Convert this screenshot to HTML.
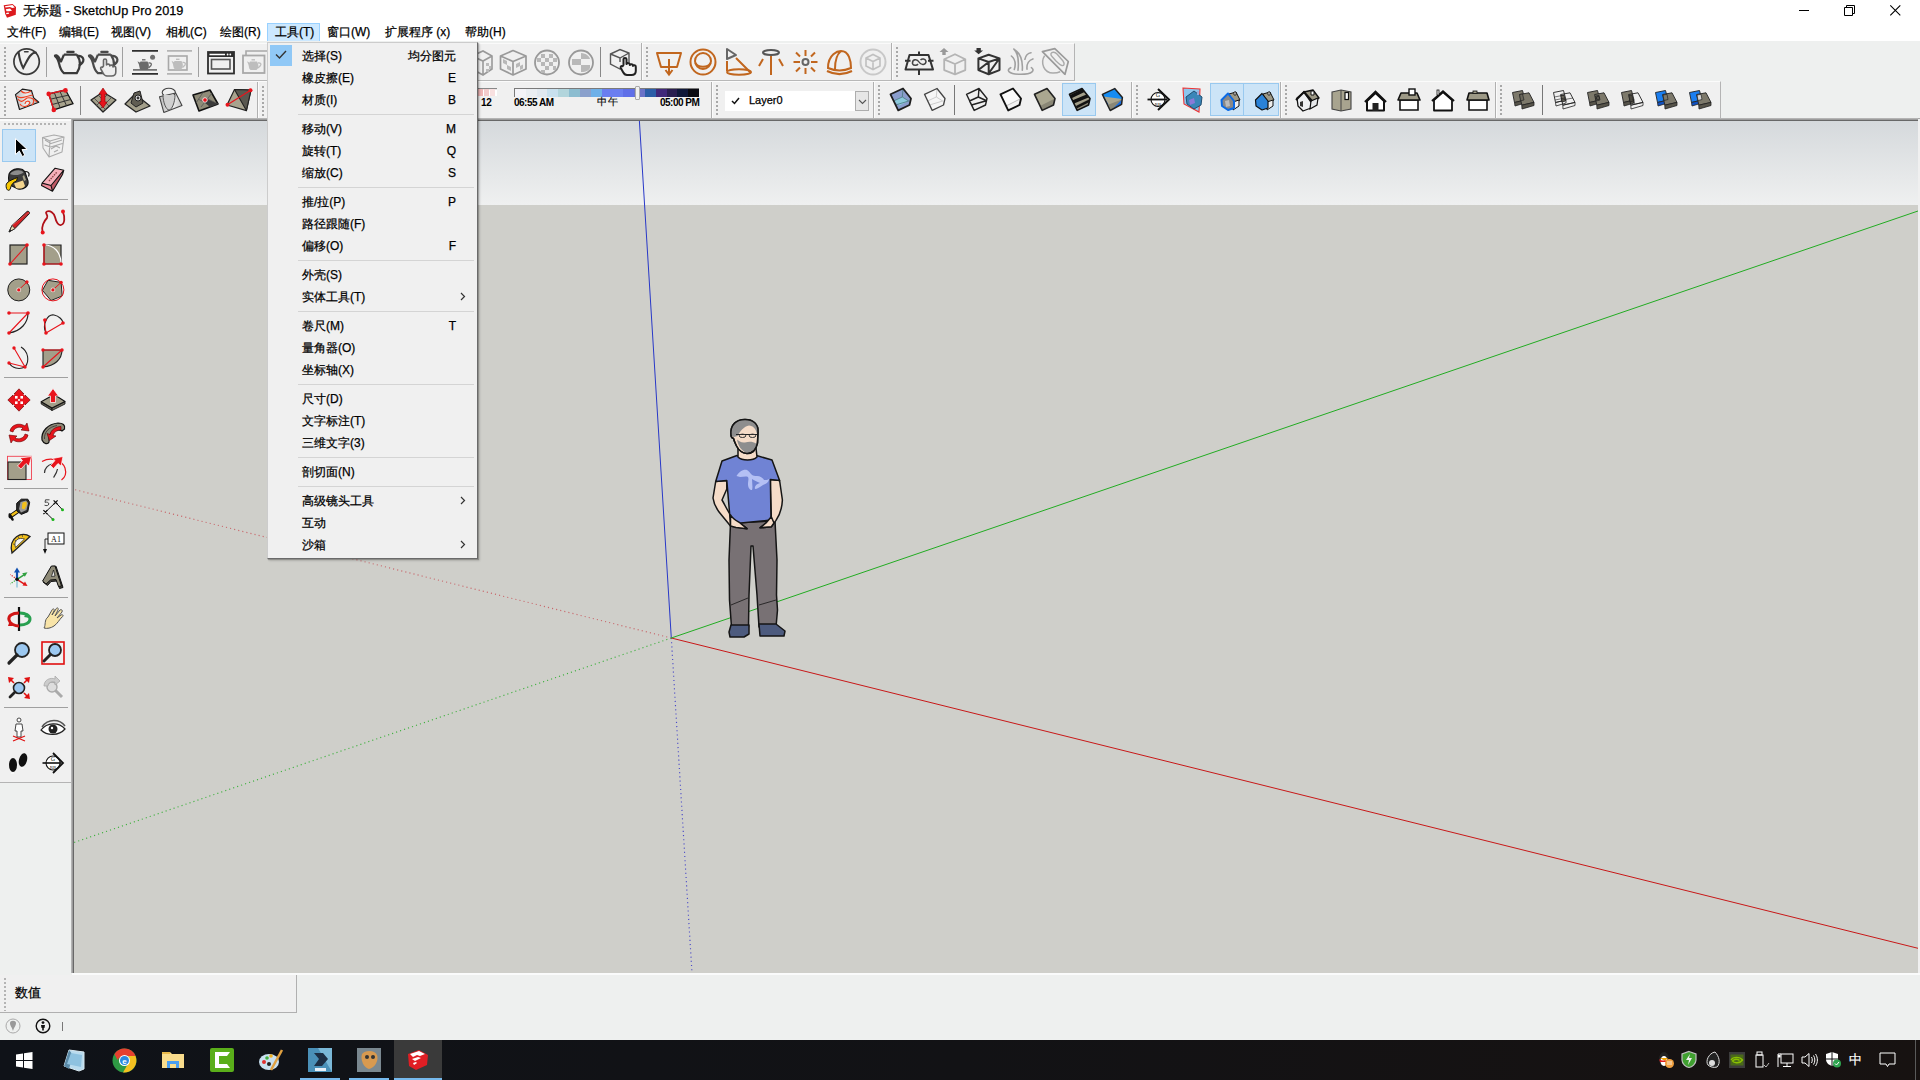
<!DOCTYPE html><html><head><meta charset="utf-8"><title>SketchUp</title><style>
*{margin:0;padding:0;box-sizing:border-box}
html,body{width:1920px;height:1080px;overflow:hidden;background:#f0f0f0;font-family:"Liberation Sans", sans-serif;}
.a{position:absolute}
.t{position:absolute;white-space:nowrap;color:#000;font-size:12px;line-height:14px;-webkit-text-stroke:0.25px #000}
svg{position:absolute;overflow:visible}
</style></head><body>
<div class="a" style="left:0;top:0;width:1920px;height:41px;background:#fff"></div>
<svg style="left:0;top:0" width="20" height="20" viewBox="0 0 20 20"><path d="M3.7 5.2 L12.5 4 L16 7 L15.8 14.8 L7 17.7 L5.2 14Z" fill="#dc1a1e"/><path d="M5 6.2 L12.5 5 L14.8 7.6 L12.2 8.1 L10 6.9 L5.4 7.6Z M5.8 9.3 L10 8.6 L12 10.8 L9 11.3 L6.5 11.2Z M6 13 L8.5 12.5 L9.2 13.8 L6.5 14.3Z" fill="#fff"/></svg>
<div class="t" style="left:23px;top:4px;font-size:12.7px;line-height:15px">无标题 - SketchUp Pro 2019</div>
<div class="a" style="left:1799px;top:10px;width:10px;height:1px;background:#000"></div>
<svg style="left:1844px;top:5px" width="11" height="11" viewBox="0 0 11 11"><path d="M0.5 2.5h8v8h-8z M2.5 2.5v-2h8v8h-2" fill="none" stroke="#000" stroke-width="1"/></svg>
<svg style="left:1890px;top:5px" width="11" height="11" viewBox="0 0 11 11"><path d="M0.3 0.3L10.3 10.3M10.3 0.3L0.3 10.3" stroke="#000" stroke-width="1.1"/></svg>
<div class="a" style="left:267px;top:23px;width:53px;height:19px;background:#cce8ff;border:1px solid #99d1ff"></div>
<div class="t" style="left:7px;top:25px">文件(F)</div>
<div class="t" style="left:59px;top:25px">编辑(E)</div>
<div class="t" style="left:111px;top:25px">视图(V)</div>
<div class="t" style="left:166px;top:25px">相机(C)</div>
<div class="t" style="left:220px;top:25px">绘图(R)</div>
<div class="t" style="left:275px;top:25px">工具(T)</div>
<div class="t" style="left:327px;top:25px">窗口(W)</div>
<div class="t" style="left:385px;top:25px">扩展程序 (x)</div>
<div class="t" style="left:465px;top:25px">帮助(H)</div>
<div class="a" style="left:0;top:41px;width:1920px;height:80px;background:#eef0ef"></div>
<div class="a" style="left:0;top:43px;width:1075px;height:38px;background:#f0f0f0;border-top:1px solid #fafafa;border-right:1px solid #b4b4b4;border-bottom:1px solid #b8b8b8"></div>
<div class="a" style="left:0;top:81px;width:1721px;height:37px;background:#f0f0f0;border-top:1px solid #fbfbfb;border-right:1px solid #b4b4b4"></div>
<div class="a" style="left:0;top:118px;width:1920px;height:1px;background:#a8a8a8"></div>
<div class="a" style="left:0;top:119px;width:71px;height:1px;background:#fafafa"></div>
<div class="a" style="left:0;top:120px;width:71px;height:662px;background:#f0f0f0;border-top:1px solid #fbfbfb"></div>
<div class="a" style="left:0;top:782px;width:72px;height:1px;background:#b4b4b4"></div>
<div class="a" style="left:0;top:783px;width:72px;height:190px;background:#eef0ef"></div>
<div class="a" style="left:71px;top:118px;width:1px;height:855px;background:#b4b4b4"></div>
<div class="a" style="left:72px;top:119px;width:1px;height:854px;background:#9c9c9c"></div>
<div class="a" style="left:73px;top:120px;width:1px;height:853px;background:#686868"></div>
<div class="a" style="left:71px;top:118px;width:1847px;height:1px;background:#b4b4b4"></div>
<div class="a" style="left:72px;top:119px;width:1846px;height:1px;background:#9c9c9c"></div>
<div class="a" style="left:73px;top:120px;width:1845px;height:1px;background:#686868"></div>
<div class="a" style="left:74px;top:121px;width:1844px;height:84px;background:linear-gradient(#d5d9dc,#eff0f0)"></div>
<div class="a" style="left:74px;top:205px;width:1844px;height:768px;background:#cfcfca"></div>
<div class="a" style="left:1918px;top:121px;width:2px;height:852px;background:#f0f0f0"></div>
<svg style="left:74px;top:121px" width="1844" height="852" viewBox="74 121 1844 852"><line x1="671.3" y1="638" x2="639.4" y2="121" stroke="#2838c8" stroke-width="1"/><line x1="671.3" y1="638" x2="692" y2="973" stroke="#4848c8" stroke-width="1.15" stroke-dasharray="1.1 3.1"/><line x1="671.3" y1="638" x2="1918" y2="948.3" stroke="#c81818" stroke-width="1"/><line x1="671.3" y1="638" x2="74" y2="489.5" stroke="#c8686c" stroke-width="1.15" stroke-dasharray="1.1 3.1"/><line x1="671.3" y1="638" x2="1918" y2="211" stroke="#22ac22" stroke-width="1"/><line x1="671.3" y1="638" x2="74" y2="842.5" stroke="#3cb03c" stroke-width="1.15" stroke-dasharray="1.1 3.1"/></svg>
<div class="a" style="left:0;top:973px;width:1920px;height:67px;background:#eef0ef"></div>
<div class="a" style="left:72px;top:973px;width:1848px;height:2px;background:#fafbfb"></div>
<div class="a" style="left:0;top:975px;width:297px;height:38px;background:#f0f0f0;border-right:1px solid #b0b0b0;border-bottom:1px solid #b0b0b0"></div>
<div class="t" style="left:15px;top:985px;font-size:13px;line-height:15px">数值</div>
<div class="a" style="left:0;top:1040px;width:1920px;height:40px;background:linear-gradient(90deg,#0f1218,#121215 50%,#171211)"></div>
<div class="a" style="left:4px;top:47px;width:2px;height:31px;background:repeating-linear-gradient(transparent 0 0.5px,#a8a8a8 0.5px 2px,transparent 2px 4px)"></div><svg style="left:13px;top:48px" width="28" height="28" viewBox="0 0 28 28"><circle cx="13.6" cy="13.6" r="12.7" fill="none" stroke="#3a3a3a" stroke-width="1.7"/><path d="M5.6 4.4 C6.5 11 8 16 10.2 19.9 C12.5 16 14.5 11 17 8 C19 5.5 21 4.5 22.8 4.5" fill="none" stroke="#3a3a3a" stroke-width="2.1" stroke-linecap="round"/><path d="M11.6 3.8 H15" stroke="#3a3a3a" stroke-width="1.6" stroke-linecap="round"/></svg><div class="a" style="left:46px;top:47px;width:1px;height:30px;background:#a0a0a0"></div><svg style="left:54px;top:50px" width="30" height="27" viewBox="0 0 30 27"><path d="M13.3 1.9 H19.6" stroke="#3a3a3a" stroke-width="2.2" stroke-linecap="round"/><path d="M9.9 4.7 H22.8 M22.8 4.7 C25 8 26 11 25.9 14 C25.8 17 24.5 20.5 22.8 23.1 H9.9 C7.5 21 6 18 5.2 14 C4.5 11 3.5 8 1.5 6.5 C0.5 5.8 1 5 2.5 5.3 C4 5.6 5.5 8 7 11.6 L9.9 4.7" fill="none" stroke="#3a3a3a" stroke-width="2.2" stroke-linejoin="round"/><path d="M23.5 6 C26 5.5 29 6.5 29.4 9.5 C29.6 12 27.5 14 24.8 15.6" fill="none" stroke="#3a3a3a" stroke-width="2.2"/></svg><svg style="left:88px;top:50px" width="30" height="27" viewBox="0 0 30 27"><path d="M13.3 1.9 H19.6" stroke="#4a4a4a" stroke-width="2.2" stroke-linecap="round"/><path d="M9.9 4.7 H22.8 M22.8 4.7 C25 8 26 11 25.9 14 C25.8 17 24.5 20.5 22.8 23.1 H9.9 C7.5 21 6 18 5.2 14 C4.5 11 3.5 8 1.5 6.5 C0.5 5.8 1 5 2.5 5.3 C4 5.6 5.5 8 7 11.6 L9.9 4.7" fill="none" stroke="#4a4a4a" stroke-width="2.2" stroke-linejoin="round"/><path d="M23.5 6 C26 5.5 29 6.5 29.4 9.5 C29.6 12 27.5 14 24.8 15.6" fill="none" stroke="#4a4a4a" stroke-width="2.2"/></svg><svg style="left:100px;top:58px" width="17" height="19" viewBox="0 0 17 19"><path d="M3.5 8 V2.3 C3.5 0.5 6.5 0.5 6.5 2.3 V7 C7 5.8 9.5 5.8 9.8 7.2 V8 C10.3 6.8 12.7 6.8 13 8.4 V9 C13.4 8 15.8 8 15.8 9.8 V14 C15.8 16.5 14 18 11.5 18 H7 C5 18 4 17 3 15 L0.8 11 C0.2 9.8 1.2 8.5 2.5 9.3 Z" fill="#eee" stroke="#666" stroke-width="1.6" stroke-linejoin="round"/></svg><div class="a" style="left:122px;top:47px;width:1px;height:30px;background:#a0a0a0"></div><svg style="left:131px;top:50px" width="28" height="26" viewBox="0 0 28 26"><path d="M1 0.9H27 M1 23.9H27" stroke="#2e2e2e" stroke-width="1.8"/><path d="M2 19.9H26" stroke="#666" stroke-width="1.6"/><g transform="translate(6 9) scale(1.0)"><path d="M5 0.8 H8.5" stroke="#6a6a6a" stroke-width="1.4"/><path d="M3.5 2.5 H10.5 C12 5 12.3 7 11.3 9.5 L10 11 H4 L2.8 9.5 C2 7 2 5 3.5 2.5Z" fill="#6a6a6a"/><path d="M3.5 4 L0.5 2.2 L2.8 7.5" fill="#6a6a6a"/><path d="M11.5 4 C14 3.5 15 5 14 6.5 L11.5 9" fill="none" stroke="#6a6a6a" stroke-width="1.3"/></g><circle cx="21.6" cy="7.3" r="2.5" fill="#707070"/></svg><svg style="left:166px;top:50px" width="28" height="26" viewBox="0 0 28 26"><path d="M1 0.9H26 M1 23.9H26" stroke="#b4b4b4" stroke-width="1.6"/><rect x="2.5" y="6" width="18.5" height="14" fill="none" stroke="#a8a8a8" stroke-width="1.6"/><g transform="translate(5 8.5) scale(1.0)"><path d="M5 0.8 H8.5" stroke="#bdbdbd" stroke-width="1.4"/><path d="M3.5 2.5 H10.5 C12 5 12.3 7 11.3 9.5 L10 11 H4 L2.8 9.5 C2 7 2 5 3.5 2.5Z" fill="#bdbdbd"/><path d="M3.5 4 L0.5 2.2 L2.8 7.5" fill="#bdbdbd"/><path d="M11.5 4 C14 3.5 15 5 14 6.5 L11.5 9" fill="none" stroke="#bdbdbd" stroke-width="1.3"/></g></svg><div class="a" style="left:198px;top:47px;width:1px;height:30px;background:#a0a0a0"></div><svg style="left:207px;top:51px" width="29" height="24" viewBox="0 0 29 24"><rect x="1" y="1" width="26" height="21.5" fill="none" stroke="#2e2e2e" stroke-width="1.8"/><path d="M1 1 H27 V6 H1Z" fill="#2e2e2e"/><path d="M2.5 3.5 H18" stroke="#fff" stroke-width="1.5"/><circle cx="20.6" cy="3.5" r="0.9" fill="#fff"/><circle cx="23.3" cy="3.5" r="0.9" fill="#fff"/><rect x="4.5" y="8.5" width="18.5" height="9.5" fill="none" stroke="#555" stroke-width="1.6"/></svg><svg style="left:242px;top:49px" width="26" height="26" viewBox="0 0 26 26"><path d="M4 6 V2 H26" fill="none" stroke="#a8a8a8" stroke-width="1.6"/><rect x="1" y="6.5" width="21.5" height="17.5" fill="none" stroke="#a8a8a8" stroke-width="1.8"/><g transform="translate(4.5 10) scale(1.0)"><path d="M5 0.8 H8.5" stroke="#bdbdbd" stroke-width="1.4"/><path d="M3.5 2.5 H10.5 C12 5 12.3 7 11.3 9.5 L10 11 H4 L2.8 9.5 C2 7 2 5 3.5 2.5Z" fill="#bdbdbd"/><path d="M3.5 4 L0.5 2.2 L2.8 7.5" fill="#bdbdbd"/><path d="M11.5 4 C14 3.5 15 5 14 6.5 L11.5 9" fill="none" stroke="#bdbdbd" stroke-width="1.3"/></g></svg><svg style="left:470px;top:49px" width="24" height="28" viewBox="0 0 24 28"><path d="M2 7 L13 2 L22 7 V20 L13 26 L2 20 Z M2 7 L13 12 L22 7 M13 12 V26" fill="none" stroke="#999" stroke-width="1.6"/><path d="M16 14h3v3h-3z M19 17h2v3h-2z M16 20h3v3h-3z" fill="#bbb"/></svg><svg style="left:499px;top:49px" width="29" height="27" viewBox="0 0 29 27"><path d="M1.5 7 L14 1.5 L27 7 V20 L14 26 L1.5 20 Z M1.5 7 L14 12.5 L27 7 M14 12.5 V26" fill="none" stroke="#999" stroke-width="1.7" stroke-linejoin="round"/><path d="M4 10l4 2v4l-4-2z M8 16l4 2v4l-4-2z M17 15l4-2v4l-4 2z M21 17l3-1.5v4l-3 1.5z" fill="#b8b8b8"/></svg><svg style="left:534px;top:49px" width="26" height="27" viewBox="0 0 26 27"><circle cx="13" cy="13.5" r="12" fill="none" stroke="#999" stroke-width="1.8"/><path d="M7 5h4v4H7z M15 5h4v4h-4z M3 9h4v4H3z M11 9h4v4h-4z M19 9h4v4h-4z M7 13h4v4H7z M15 13h4v4h-4z M11 17h4v4h-4z M19 17h3v4h-3z M7 21h4v3H7z" fill="#b8b8b8"/></svg><svg style="left:568px;top:49px" width="26" height="27" viewBox="0 0 26 27"><circle cx="13" cy="13.5" r="12" fill="none" stroke="#999" stroke-width="1.8"/><path d="M13 4 C18 4 22 8 22 10H13z M4 10h9v6H4z M13 16h9v3C21 21 19 23 13 23z" fill="#b8b8b8"/></svg><div class="a" style="left:600px;top:47px;width:1px;height:30px;background:#888"></div><svg style="left:609px;top:48px" width="22" height="23" viewBox="0 0 22 23"><path d="M1.5 6 L11 1.5 L20 5 V16 L11 21 L1.5 16 Z M1.5 6 L11 10 L20 5 M11 10 V14" fill="none" stroke="#555" stroke-width="1.4"/></svg><svg style="left:620px;top:57px" width="17" height="20" viewBox="0 0 17 20"><path d="M3.5 8 V2.3 C3.5 0.5 6.5 0.5 6.5 2.3 V7 C7 5.8 9.5 5.8 9.8 7.2 V8 C10.3 6.8 12.7 6.8 13 8.4 V9 C13.4 8 15.8 8 15.8 9.8 V14 C15.8 16.5 14 18 11.5 18 H7 C5 18 4 17 3 15 L0.8 11 C0.2 9.8 1.2 8.5 2.5 9.3 Z" fill="#f4f4f4" stroke="#222" stroke-width="2" stroke-linejoin="round"/></svg><div class="a" style="left:641px;top:43px;width:1px;height:37px;background:#b0b0b0;box-shadow:1px 0 0 #fbfbfb"></div><div class="a" style="left:646px;top:47px;width:2px;height:31px;background:repeating-linear-gradient(transparent 0 0.5px,#a8a8a8 0.5px 2px,transparent 2px 4px)"></div><svg style="left:655px;top:50px" width="28" height="26" viewBox="0 0 28 26"><path d="M2 3H26 L22 17H6Z" fill="none" stroke="#c1661e" stroke-width="2" stroke-linejoin="round"/><path d="M14 9V24 M10.5 20 L14 24.5 L17.5 20" fill="none" stroke="#c1661e" stroke-width="2"/></svg><svg style="left:689px;top:48px" width="28" height="28" viewBox="0 0 28 28"><circle cx="14" cy="14" r="12.5" fill="none" stroke="#c1661e" stroke-width="2"/><circle cx="14" cy="13" r="8" fill="none" stroke="#c1661e" stroke-width="2"/><path d="M6.5 15 C9 20 19 20 21.5 15" fill="none" stroke="#c1661e" stroke-width="2"/></svg><svg style="left:725px;top:48px" width="28" height="28" viewBox="0 0 28 28"><path d="M2 1 L11 7 L2 11Z" fill="none" stroke="#666" stroke-width="2" stroke-linejoin="round"/><path d="M2 13 L2 23 M11 10 L26 25" stroke="#c1661e" stroke-width="2"/><ellipse cx="14" cy="24" rx="12" ry="2.8" fill="none" stroke="#c1661e" stroke-width="2"/></svg><svg style="left:758px;top:48px" width="26" height="28" viewBox="0 0 26 28"><ellipse cx="13" cy="4.5" rx="8" ry="2.5" fill="none" stroke="#555" stroke-width="2"/><path d="M13 8V27 M5 11L1 18 M21 11L25 18" stroke="#c1661e" stroke-width="2"/></svg><svg style="left:793px;top:49px" width="25" height="26" viewBox="0 0 25 26"><circle cx="12.5" cy="13" r="3" fill="none" stroke="#666" stroke-width="2"/><path d="M12.5 1V7 M12.5 19V25 M0.5 13H7 M18 13H24.5 M3 3.5L7 7.5 M18 18.5L22 22.5 M22 3.5L18 7.5 M7 18.5L3 22.5" stroke="#c1661e" stroke-width="2"/></svg><svg style="left:826px;top:49px" width="27" height="26" viewBox="0 0 27 26"><path d="M2 19 C2 5 12 2 15 2 C23 2 25 12 25 19 C18 22 9 22 2 19Z M15 2 C10 6 9 14 9 20" fill="none" stroke="#c1661e" stroke-width="2"/><path d="M1 22 C9 26 18 26 26 22" fill="none" stroke="#c1661e" stroke-width="2"/></svg><svg style="left:859px;top:48px" width="28" height="28" viewBox="0 0 28 28"><circle cx="14" cy="14" r="12.5" fill="none" stroke="#c8c8c8" stroke-width="2"/><path d="M7 10 L14 6.5 L21 10 V18 L14 21.5 L7 18Z M7 10L14 13.5 L21 10 M14 13.5V21.5" fill="none" stroke="#c0c0c0" stroke-width="1.6"/></svg><div class="a" style="left:891px;top:43px;width:1px;height:37px;background:#b0b0b0;box-shadow:1px 0 0 #fbfbfb"></div><div class="a" style="left:896px;top:47px;width:2px;height:31px;background:repeating-linear-gradient(transparent 0 0.5px,#a8a8a8 0.5px 2px,transparent 2px 4px)"></div><svg style="left:905px;top:48px" width="29" height="28" viewBox="0 0 29 28"><path d="M14 3.5V7.5 M14 21V27 M0 12.7H5.5 M23 12.7H28.5" stroke="#333" stroke-width="2"/><path d="M4.5 7 H23.5 L28 21.6 H0.5Z" fill="none" stroke="#333" stroke-width="2" stroke-linejoin="round"/><path d="M7.5 16 C7 11 12 10.5 14 14 C16 17.5 21 17.5 21 13 M7.5 16 C9 18 12 17.5 13 16 M21 13 C20 10.5 17 10.5 15.5 12" fill="none" stroke="#444" stroke-width="1.5"/></svg><svg style="left:939px;top:47px" width="28" height="29" viewBox="0 0 28 29"><path d="M0.5 5 L5 1 L9.5 5Z M3.3 5H6.7V8H3.3Z" fill="#999"/><path d="M16 7.2 L26.3 12.3 V23.1 L16 27.3 L5.2 23.1 V12.3Z M5.2 12.3 L16 17 L26.3 12.3 M16 17 V27.3" fill="none" stroke="#b4b4b4" stroke-width="1.8" stroke-linejoin="round"/></svg><svg style="left:974px;top:47px" width="27" height="29" viewBox="0 0 27 29"><path d="M0.2 3.4 H9.1 L4.6 7.2Z M2.5 1H6.8V3.5H2.5Z" fill="#333"/><path d="M14.7 7.7 L25.5 11.4 V23.1 L14.7 27.3 L4.4 23.1 V11.4Z M4.4 11.4 L14.7 15 L25.5 11.4 M14.7 15 V27.3 M4.4 23 L14.7 15 M15 26 L25 12" fill="none" stroke="#333" stroke-width="2" stroke-linejoin="round"/></svg><svg style="left:1003px;top:44px" width="34" height="34" viewBox="0 0 34 34"><path d="M7.7 23.7 C3 26 5 30.3 17.9 30.3 C30 30.3 32 26 28.4 23.7 M8.4 12 C12 15 13 20 11.3 25.5 M10.9 5.1 C15 9 16 17 15 26.2 M10.9 5.1 C17 9 20 17 19.3 26.2 M28 8.7 C25 9 22.5 12 21.9 15.3 M29.9 14.9 C26 16 23.5 20 24 25.2" fill="none" stroke="#a0a0a0" stroke-width="1.6" stroke-linecap="round"/></svg><svg style="left:1041px;top:48px" width="30" height="30" viewBox="0 0 30 30"><path d="M1.4 3.7 L13.8 0.7 L27.3 13.5 L24 26.3Z" fill="none" stroke="#9a9a9a" stroke-width="1.7" stroke-linejoin="round"/><path d="M10 5.5 C11 3.5 14 4 16 6 L22 13 C24 16 23 18 21 17.5 C19 17 17 15 15 13 L11 8.5 C10 7.5 9.7 6.5 10 5.5Z" fill="none" stroke="#aaa" stroke-width="1.4"/><path d="M3.6 7.7 C-1 15 3 25 12 25 C15 25 17.5 24.5 19.2 23.7" fill="none" stroke="#aaa" stroke-width="1.5"/></svg>
<div class="a" style="left:257px;top:82px;width:1px;height:36px;background:#b0b0b0;box-shadow:1px 0 0 #fbfbfb"></div><div class="a" style="left:4px;top:86px;width:2px;height:30px;background:repeating-linear-gradient(transparent 0 0.5px,#a8a8a8 0.5px 2px,transparent 2px 4px)"></div><svg style="left:15px;top:88px" width="25" height="23" viewBox="0 0 25 23"><defs><linearGradient id="sg" x1="0" x2="1"><stop offset="0" stop-color="#bbb"/><stop offset="0.5" stop-color="#eee"/><stop offset="1" stop-color="#aaa"/></linearGradient></defs><path d="M0.5 6.6 L7.4 1.1 L16.5 2.6 L18.7 9.9 L23.8 14.2 L4.5 21.5Z" fill="url(#sg)" stroke="#1a1a1a" stroke-width="1.2" stroke-linejoin="round"/><path d="M6 3 C9 6 13 5 16 3 M2 8 C5 12 11 8 18 7 M3 11 C6 16 9 12 12 10 C15 9 19 11 22 14 M5 16 C7 20 13 19 15 15 C14 12 10 13 10 16 M17 17 C19 15 19 12 18 11" fill="none" stroke="#f04020" stroke-width="1.1"/></svg><svg style="left:46px;top:88px" width="29" height="25" viewBox="0 0 29 25"><path d="M2.7 5.9 L19.5 2 L27.1 15.7 L7.8 21.9Z" fill="#a8a38d" stroke="#111" stroke-width="1.3" stroke-linejoin="round"/><path d="M8.3 4.6 L14.2 19.8 M13.9 3.3 L20.6 17.8 M4.3 11.2 L22.2 7.2 M5.9 16.6 L24.6 11.5" stroke="#333" stroke-width="1"/><path d="M2.7 5.9 L19.5 2 M2.7 5.9 L7.8 21.9" stroke="#e8141c" stroke-width="1.4"/><circle cx="2.7" cy="5.9" r="2.3" fill="#e8141c"/><circle cx="19.5" cy="2.4" r="2.3" fill="#e8141c"/><circle cx="7.8" cy="21.9" r="2.3" fill="#e8141c"/></svg><div class="a" style="left:80px;top:86px;width:1px;height:29px;background:#888"></div><svg style="left:90px;top:87px" width="27" height="26" viewBox="0 0 27 26"><path d="M1 13 L13 5 L26 13 L13 25Z" fill="#a39f8a" stroke="#222" stroke-width="1.3" stroke-linejoin="round"/><path d="M4 11 L16 23 M8 8 L20 20 M18 7 L6 19 M22 10 L10 22" stroke="#444" stroke-width="0.8"/><path d="M13 1 L17 7 H15 V15 H17 L13 21 L9 15 H11 V7 H9Z" fill="#e8141c" stroke="#900" stroke-width="0.6"/></svg><svg style="left:124px;top:89px" width="27" height="24" viewBox="0 0 27 24"><path d="M1 15 L11 5 L26 17 L12 23Z" fill="#a39f8a" stroke="#222" stroke-width="1.3" stroke-linejoin="round"/><path d="M7 14 L10 4 L16 2 L19 14 L12 18Z" fill="#605d52" stroke="#222" stroke-width="1"/><circle cx="14" cy="9" r="3" fill="#ddd" stroke="#222" stroke-width="1"/><circle cx="14" cy="9" r="1.4" fill="#333"/></svg><svg style="left:159px;top:87px" width="24" height="27" viewBox="0 0 24 27"><defs><linearGradient id="dg" x1="0" x2="1"><stop offset="0" stop-color="#bdbdbd"/><stop offset="0.6" stop-color="#eee"/><stop offset="1" stop-color="#c8c8c8"/></linearGradient></defs><path d="M0.5 9.8 L16.7 6 L23 18.6 L4.8 25.4Z" fill="url(#dg)" stroke="#444" stroke-width="1.1" stroke-linejoin="round"/><ellipse cx="9.8" cy="5.4" rx="6.6" ry="4.2" fill="none" stroke="#444" stroke-width="1.1"/><path d="M4 8 C4 15 7 23 10 23 C13 23 16 15 16 8" fill="#d0d0d0" stroke="#555" stroke-width="1"/></svg><svg style="left:192px;top:89px" width="27" height="23" viewBox="0 0 27 23"><path d="M1 6 L18 1 L26 15 L7 22Z" fill="#8f8b78" stroke="#111" stroke-width="1.6" stroke-linejoin="round"/><path d="M4 14 L12 2 M9 18 L20 4 M14 9 L26 15 M6 10 L18 16" stroke="#555" stroke-width="0.8"/><path d="M15 10 L26 15 L18 18 L12 13Z" fill="#3a3a3a"/><circle cx="13" cy="11" r="2.3" fill="#e8141c" stroke="#fff" stroke-width="0.8"/></svg><svg style="left:226px;top:89px" width="27" height="24" viewBox="0 0 27 24"><path d="M1 16 L8.5 0.5 L25 1 L20.4 21.6Z" fill="#a8a38e" stroke="#222" stroke-width="1.2" stroke-linejoin="round"/><path d="M8.5 0.5 L25 1 L20.4 21.6Z" fill="#5a5850" stroke="#222" stroke-width="1.1" stroke-linejoin="round"/><path d="M1 16 L25 1" stroke="#e8141c" stroke-width="1.2"/><circle cx="1.5" cy="15.7" r="2" fill="#e8141c"/><circle cx="24.5" cy="1.3" r="2" fill="#e8141c"/></svg><div class="a" style="left:262px;top:86px;width:2px;height:30px;background:repeating-linear-gradient(transparent 0 0.5px,#a8a8a8 0.5px 2px,transparent 2px 4px)"></div><svg style="left:476px;top:87px" width="22" height="10" viewBox="0 0 22 10"><rect x="1" y="1" width="20" height="8" fill="#fff"/><rect x="1" y="1" width="20" height="1.2" fill="#888"/><rect x="2" y="2" width="5" height="7" fill="#f0b8b8"/><rect x="8" y="2" width="5" height="7" fill="#f3cccc"/><rect x="14" y="2" width="5" height="7" fill="#f8e0e0"/></svg><div class="t" style="left:481px;top:97px;font-size:10px;line-height:11px;font-weight:bold;letter-spacing:-0.3px;-webkit-text-stroke:0">12</div><div class="a" style="left:514px;top:88px;width:185px;height:9px;background:linear-gradient(90deg,#f4f4f8 0.0% 5.9%, #eaeef2 5.9% 11.8%, #e0e8ef 11.8% 17.6%, #c8e0ee 17.6% 23.5%, #b2d5dc 23.5% 29.4%, #8cbdd0 29.4% 35.3%, #8aa0cc 35.3% 41.2%, #6fb0e8 41.2% 47.1%, #6a7ef0 47.1% 52.9%, #6a7ef0 52.9% 58.8%, #5f6fe8 58.8% 64.7%, #6a72c8 64.7% 70.6%, #2b5ea8 70.6% 76.5%, #40287a 76.5% 82.4%, #2a1e50 82.4% 88.2%, #10183a 88.2% 94.1%, #0a0a12 94.1% 100.0%);border-top:1.5px solid #7a7a7a;border-left:1.5px solid #7a7a7a"></div><div class="a" style="left:635px;top:86px;width:5px;height:14px;background:#f0f0f0;border:1px solid #aaa;border-radius:1px"></div><div class="t" style="left:514px;top:97px;font-size:10px;line-height:11px;font-weight:bold;letter-spacing:-0.5px;-webkit-text-stroke:0">06:55 AM</div><div class="t" style="left:597px;top:96px;font-size:10px;line-height:11px;letter-spacing:1px;-webkit-text-stroke:0.15px #000">中午</div><div class="t" style="left:660px;top:97px;font-size:10px;line-height:11px;font-weight:bold;letter-spacing:-0.5px;-webkit-text-stroke:0">05:00 PM</div><div class="a" style="left:711px;top:82px;width:1px;height:36px;background:#b0b0b0;box-shadow:1px 0 0 #fbfbfb"></div><div class="a" style="left:716px;top:85px;width:2px;height:31px;background:repeating-linear-gradient(transparent 0 0.5px,#a8a8a8 0.5px 2px,transparent 2px 4px)"></div><div class="a" style="left:725px;top:91px;width:144px;height:20px;background:#fff"></div><div class="a" style="left:855px;top:91px;width:14px;height:20px;background:#e6e6e6;border:1px solid #adadad"></div><svg style="left:858px;top:99px" width="9" height="6" viewBox="0 0 9 6"><path d="M1 1 L4.5 4.5 L8 1" fill="none" stroke="#555" stroke-width="1.1"/></svg><svg style="left:731px;top:97px" width="9" height="8" viewBox="0 0 9 8"><path d="M1 4 L3.5 6.5 L8 1" fill="none" stroke="#111" stroke-width="1.5"/></svg><div class="t" style="left:749px;top:94px;font-size:11px;line-height:13px">Layer0</div><div class="a" style="left:873px;top:82px;width:1px;height:36px;background:#b0b0b0;box-shadow:1px 0 0 #fbfbfb"></div><div class="a" style="left:878px;top:85px;width:2px;height:31px;background:repeating-linear-gradient(transparent 0 0.5px,#a8a8a8 0.5px 2px,transparent 2px 4px)"></div><svg style="left:890px;top:88px" width="23" height="24" viewBox="0 0 23 24"><path d="M0.5 6.3 L13 0.5 L21 10.5 L19.5 17 L8.2 22.4Z" fill="#8a9dcc"/><path d="M7 17.5 L21 10.5 L19.5 17 L8.2 22.4Z" fill="#8a9dcc"/><path d="M3.5 13 L12.3 9 L18.7 13 L9.5 17.5Z" fill="#8ccadc"/><path d="M13 0.5 L12.3 9 M3.5 13 L12.3 9 L18.7 13 M5.5 17 L18.7 13" fill="none" stroke="#4a7a80" stroke-width="0.8"/><path d="M0.5 6.3 L13 0.5 L21 10.5 L19.5 17 L8.2 22.4Z" fill="none" stroke="#1e1e1e" stroke-width="1.8" stroke-linejoin="round"/></svg><svg style="left:924px;top:88px" width="23" height="24" viewBox="0 0 23 24"><path d="M0.5 6.3 L13 0.5 L21 10.5 L19.5 17 L8.2 22.4Z" fill="#f6f6f6"/><path d="M7 17.5 L21 10.5 L19.5 17 L8.2 22.4Z" fill="#f6f6f6"/><path d="M13 0.5 L12.3 9 L3.5 13 M12.3 9 L18.7 13 M5.5 17 L18.7 13" fill="none" stroke="#bbb" stroke-width="0.7"/><path d="M0.5 6.3 L13 0.5 L21 10.5 L19.5 17 L8.2 22.4Z" fill="none" stroke="#444" stroke-width="1.3" stroke-linejoin="round"/></svg><div class="a" style="left:954px;top:85px;width:1px;height:30px;background:#777"></div><svg style="left:966px;top:88px" width="23" height="24" viewBox="0 0 23 24"><path d="M0.5 6.3 L13 0.5 L21 10.5 L19.5 17 L8.2 22.4Z M13 0.5 L12.3 9 L3.5 13 M12.3 9 L20 12.5 M5.5 17 L19.5 13 M3.5 13 L8.2 22.4" fill="none" stroke="#222" stroke-width="1.4" stroke-linejoin="round"/></svg><svg style="left:1000px;top:88px" width="23" height="24" viewBox="0 0 23 24"><path d="M0.5 6.3 L13 0.5 L21 10.5 L19.5 17 L8.2 22.4Z" fill="#fafafa"/><path d="M7 17.5 L21 10.5 L19.5 17 L8.2 22.4Z" fill="#f4f4f4"/><path d="M7 17.5 L21 10.5" fill="none" stroke="#999" stroke-width="0.6"/><path d="M0.5 6.3 L13 0.5 L21 10.5 L19.5 17 L8.2 22.4Z" fill="none" stroke="#111" stroke-width="1.9" stroke-linejoin="round"/></svg><svg style="left:1034px;top:88px" width="23" height="24" viewBox="0 0 23 24"><path d="M0.5 6.3 L13 0.5 L21 10.5 L19.5 17 L8.2 22.4Z" fill="#aaa790"/><path d="M7 17.5 L21 10.5 L19.5 17 L8.2 22.4Z" fill="#8a8776"/><path d="M0.5 6.3 L13 0.5 L21 10.5 L19.5 17 L8.2 22.4Z" fill="none" stroke="#222" stroke-width="1.6" stroke-linejoin="round"/></svg><div class="a" style="left:1062px;top:83px;width:34px;height:33px;background:#cce4f7;border:1px solid #99c9ef"></div><svg style="left:1069px;top:88px" width="23" height="25" viewBox="0 0 23 25"><path d="M0.5 6.3 L13 0.5 L21 10.5 L19.5 17 L8.2 22.4Z" fill="#a39f8a"/><path d="M7 17.5 L21 10.5 L19.5 17 L8.2 22.4Z" fill="#8a8776"/><path d="M1 7 L13 1 L15.5 4 L2 10.5Z M3 12.5 L17.5 6.5 L19.5 9.5 L5 15.5Z M7 18 L21 11 L20.5 14 L7.6 20.5Z" fill="#111"/><path d="M0.5 6.3 L13 0.5 L21 10.5 L19.5 17 L8.2 22.4Z" fill="none" stroke="#111" stroke-width="1.6" stroke-linejoin="round"/></svg><svg style="left:1102px;top:88px" width="23" height="24" viewBox="0 0 23 24"><path d="M0.4 6.4 L12.7 0.6 L20.4 9.5 L19.6 16.4 L8.2 22.5Z" fill="#aaa690"/><path d="M0.4 6.4 L12.7 0.6 L20.4 9.5 L20.2 11 L1.5 8.5Z" fill="#168cf2"/><path d="M6.6 16.4 L19.9 11.4 L19.6 16.4 L8.2 22.5Z" fill="#8a8776"/><path d="M19.9 11.4 L19.6 16.4 L8.2 22.5 L10 21.5Z" fill="#1a6ee0"/><path d="M1.5 8.5 L6.6 16.4 L5.5 16.5 L1.2 9.5Z" fill="#1a5cd0"/><path d="M0.4 6.4 L12.7 0.6 L20.4 9.5 L19.6 16.4 L8.2 22.5Z" fill="none" stroke="#222" stroke-width="1.5" stroke-linejoin="round"/></svg><div class="a" style="left:1131px;top:82px;width:1px;height:36px;background:#b0b0b0;box-shadow:1px 0 0 #fbfbfb"></div><div class="a" style="left:1136px;top:85px;width:2px;height:31px;background:repeating-linear-gradient(transparent 0 0.5px,#a8a8a8 0.5px 2px,transparent 2px 4px)"></div><svg style="left:1147px;top:88px" width="24" height="23" viewBox="0 0 24 23"><circle cx="11" cy="11.5" r="7" fill="#fff" stroke="#111" stroke-width="1.1"/><path d="M0.5 11.5 H20" stroke="#111" stroke-width="1.8"/><path d="M11 1 L22 11.5 L11 22" fill="none" stroke="#111" stroke-width="2"/><text x="11" y="9" font-size="6" text-anchor="middle" font-family="Liberation Serif" fill="#111">G</text><text x="11" y="18" font-size="5" text-anchor="middle" font-family="Liberation Serif" fill="#111">RR</text></svg><svg style="left:1182px;top:87px" width="24" height="27" viewBox="0 0 24 27"><path d="M1 1 L18 2 L17 25 L2 17Z" fill="#8cc6ee" stroke="#ee3333" stroke-width="1.1"/><path d="M4 10 L12 4 L20 10 L19 18 L12 22 L5 17Z" fill="#3a86b8" stroke="#214e70" stroke-width="1"/><path d="M7 13 L12 11 L13 16 L8 18Z" fill="#8a7ad8"/><path d="M15 4h2v4h-2z" fill="#9ad"/></svg><div class="a" style="left:1210px;top:83px;width:69px;height:33px;background:#cce4f7;border:1px solid #99c9ef"></div><div class="a" style="left:1243px;top:84px;width:1px;height:31px;background:#99c9ef"></div><svg style="left:1220px;top:91px" width="20" height="20" viewBox="0 0 20 20"><path d="M9 3 L16 1 L20 9 L13 12Z" fill="#9d9986" stroke="#111" stroke-width="1"/><path d="M13 11 L19 9 L19 15 L13 19Z" fill="#eee" stroke="#111" stroke-width="1"/><path d="M1.5 9 L8 2.5 L14 10 L14 17 L8 19 L2 15Z" fill="#888" stroke="#0a6ae6" stroke-width="2" stroke-linejoin="round"/><path d="M5 10 L9 9 L10 15 L6 16Z" fill="#bbb"/><path d="M14 1h2v3h-2z" fill="#fff" stroke="#111" stroke-width="0.8"/></svg><svg style="left:1254px;top:91px" width="20" height="20" viewBox="0 0 20 20"><path d="M9 3 L16 1 L20 9 L13 12Z" fill="#9d9986" stroke="#111" stroke-width="1"/><path d="M13 11 L19 9 L19 15 L13 19Z" fill="#eee" stroke="#111" stroke-width="1"/><path d="M1.5 9 L8 2.5 L14 10 L14 17 L8 19 L2 15Z" fill="#2a82d8" stroke="#111" stroke-width="1.2" stroke-linejoin="round"/><path d="M14 1h2v3h-2z" fill="#fff" stroke="#111" stroke-width="0.8"/></svg><div class="a" style="left:1280px;top:82px;width:1px;height:36px;background:#b0b0b0;box-shadow:1px 0 0 #fbfbfb"></div><div class="a" style="left:1285px;top:85px;width:2px;height:31px;background:repeating-linear-gradient(transparent 0 0.5px,#a8a8a8 0.5px 2px,transparent 2px 4px)"></div><svg style="left:1295px;top:89px" width="25" height="23" viewBox="0 0 25 23"><path d="M2 9 L9 3 L17 12 L16 19 L8 22 L3 17Z" fill="#eef0f2" stroke="#111" stroke-width="1.3" stroke-linejoin="round"/><path d="M9 3 L18 1 L24 9 L16 13Z" fill="#9d9986" stroke="#111" stroke-width="1.4" stroke-linejoin="round"/><path d="M16 12 L23 9 L22 16 L15 20Z" fill="#e6e8ea" stroke="#111" stroke-width="1.2"/><path d="M5 13 L8 12 V18 L5 17Z" fill="#333"/><path d="M16 2h3v4h-3z" fill="#fff" stroke="#111" stroke-width="1"/><path d="M1 11 L9 3 L17 12" fill="none" stroke="#111" stroke-width="2"/></svg><svg style="left:1331px;top:89px" width="21" height="23" viewBox="0 0 21 23"><path d="M1 3 L10 1 L20 3 V20 L10 22 L1 20Z" fill="#a8a48f" stroke="#444" stroke-width="1.1"/><path d="M10 1 V22" stroke="#444" stroke-width="1"/><rect x="14" y="3.5" width="3.5" height="7" fill="#fff" stroke="#111" stroke-width="1.2"/></svg><svg style="left:1364px;top:90px" width="23" height="22" viewBox="0 0 23 22"><path d="M3 11 L11.5 3 L20 11 V20.5 H3Z" fill="#fff" stroke="#111" stroke-width="2" stroke-linejoin="round"/><path d="M1 12 L11.5 2 L22 12" fill="none" stroke="#111" stroke-width="2.4"/><rect x="8.5" y="13" width="6" height="8" fill="#222"/></svg><svg style="left:1397px;top:88px" width="25" height="24" viewBox="0 0 25 24"><path d="M3 12 H21 V22 H3Z" fill="#fff" stroke="#111" stroke-width="1.6"/><path d="M1 12 L4 5 H20 L23 12Z" fill="#9d9986" stroke="#111" stroke-width="1.6" stroke-linejoin="round"/><rect x="12" y="1" width="6" height="6" fill="#fff" stroke="#111" stroke-width="1.4"/></svg><svg style="left:1431px;top:89px" width="24" height="23" viewBox="0 0 24 23"><path d="M3 11 L12 3 L21 11 V21.5 H3Z" fill="#fff" stroke="#111" stroke-width="1.8" stroke-linejoin="round"/><path d="M1 12 L12 2.5 L23 12" fill="none" stroke="#111" stroke-width="2.2"/><rect x="6" y="1" width="2" height="5" fill="#fff" stroke="#111" stroke-width="0.8"/></svg><svg style="left:1466px;top:90px" width="24" height="22" viewBox="0 0 24 22"><path d="M3 10 H21 V20 H3Z" fill="#fff" stroke="#111" stroke-width="1.6"/><path d="M1 10 L3 3 H21 L23 10Z" fill="#9d9986" stroke="#111" stroke-width="1.6" stroke-linejoin="round"/><rect x="7" y="1" width="4" height="2.5" fill="#9d9986" stroke="#111" stroke-width="0.8"/></svg><div class="a" style="left:1495px;top:82px;width:1px;height:36px;background:#b0b0b0;box-shadow:1px 0 0 #fbfbfb"></div><div class="a" style="left:1500px;top:85px;width:2px;height:31px;background:repeating-linear-gradient(transparent 0 0.5px,#a8a8a8 0.5px 2px,transparent 2px 4px)"></div><svg style="left:1512px;top:89px" width="24" height="22" viewBox="0 0 24 22"><path d="M0.5 3.5 L10.5 1.5 L13 11 L2.5 13.5Z" fill="#7d796b" stroke="#222" stroke-width="0.9" stroke-linejoin="round"/><path d="M2.5 13.5 L13 11 L13 14 L3 17Z" fill="#57544a" stroke="#222" stroke-width="0.8" stroke-linejoin="round"/><path d="M7.6 5.5 L17 3.8 L22 13.4 L9.8 16.2Z" fill="#7d796b" stroke="#222" stroke-width="0.9" stroke-linejoin="round"/><path d="M9.8 16.2 L22 13.4 L22 16.5 L10 20Z" fill="#57544a" stroke="#222" stroke-width="0.8" stroke-linejoin="round"/><path d="M7.6 5.5 L10.5 5 L12 11 L8.5 11.8Z" fill="#6a675b" stroke="#222" stroke-width="0.7"/></svg><div class="a" style="left:1542px;top:85px;width:1px;height:30px;background:#777"></div><svg style="left:1553px;top:89px" width="24" height="22" viewBox="0 0 24 22"><path d="M0.5 3.5 L10.5 1.5 L13 11 L2.5 13.5Z" fill="none" stroke="#222" stroke-width="0.9" stroke-linejoin="round"/><path d="M2.5 13.5 L13 11 L13 14 L3 17Z" fill="none" stroke="#222" stroke-width="0.8" stroke-linejoin="round"/><path d="M7.6 5.5 L17 3.8 L22 13.4 L9.8 16.2Z" fill="none" stroke="#222" stroke-width="0.9" stroke-linejoin="round"/><path d="M9.8 16.2 L22 13.4 L22 16.5 L10 20Z" fill="none" stroke="#222" stroke-width="0.8" stroke-linejoin="round"/><path d="M8 6.5 L11 6 L12.5 12 L9 13Z" fill="#6a675b" stroke="#222" stroke-width="0.8"/><path d="M1.5 8 L11.5 6 M2 11 L12 9 M9 11 L20 9" stroke="#222" stroke-width="0.6"/></svg><svg style="left:1587px;top:89px" width="24" height="22" viewBox="0 0 24 22"><path d="M0.5 3.5 L10.5 1.5 L13 11 L2.5 13.5Z" fill="#7d796b" stroke="#222" stroke-width="0.9" stroke-linejoin="round"/><path d="M2.5 13.5 L13 11 L13 14 L3 17Z" fill="#57544a" stroke="#222" stroke-width="0.8" stroke-linejoin="round"/><path d="M7.6 5.5 L17 3.8 L22 13.4 L9.8 16.2Z" fill="#7d796b" stroke="#222" stroke-width="0.9" stroke-linejoin="round"/><path d="M9.8 16.2 L22 13.4 L22 16.5 L10 20Z" fill="#57544a" stroke="#222" stroke-width="0.8" stroke-linejoin="round"/><path d="M8.5 7 L12 6.3 L13 11 L9.5 12Z" fill="#5a574d" stroke="#222" stroke-width="0.7"/><circle cx="11" cy="9" r="1.6" fill="none" stroke="#222" stroke-width="0.7"/></svg><svg style="left:1621px;top:89px" width="24" height="22" viewBox="0 0 24 22"><path d="M0.5 3.5 L10.5 1.5 L13 11 L2.5 13.5Z" fill="#7d796b" stroke="#222" stroke-width="0.9" stroke-linejoin="round"/><path d="M2.5 13.5 L13 11 L13 14 L3 17Z" fill="#57544a" stroke="#222" stroke-width="0.8" stroke-linejoin="round"/><path d="M7.6 5.5 L17 3.8 L22 13.4 L9.8 16.2Z" fill="none" stroke="#222" stroke-width="0.9" stroke-linejoin="round"/><path d="M9.8 16.2 L22 13.4 L22 16.5 L10 20Z" fill="none" stroke="#222" stroke-width="0.8" stroke-linejoin="round"/><path d="M8 6.5 L11 6 L12.5 12 L9 13Z" fill="#4b483f" stroke="#222" stroke-width="0.7"/><path d="M12 10 L13.5 15" stroke="#222" stroke-width="0.6"/></svg><svg style="left:1655px;top:89px" width="24" height="22" viewBox="0 0 24 22"><path d="M0.5 3.5 L10.5 1.5 L13 11 L2.5 13.5Z" fill="#1a7ef0" stroke="#222" stroke-width="0.9" stroke-linejoin="round"/><path d="M2.5 13.5 L13 11 L13 14 L3 17Z" fill="#1050c0" stroke="#222" stroke-width="0.8" stroke-linejoin="round"/><path d="M7.6 5.5 L17 3.8 L22 13.4 L9.8 16.2Z" fill="#7d796b" stroke="#222" stroke-width="0.9" stroke-linejoin="round"/><path d="M9.8 16.2 L22 13.4 L22 16.5 L10 20Z" fill="#57544a" stroke="#222" stroke-width="0.8" stroke-linejoin="round"/><path d="M8 6 L12 5.3 L13 10.5 L9 11.5Z" fill="#7d796b" stroke="#222" stroke-width="0.7"/></svg><svg style="left:1689px;top:89px" width="24" height="22" viewBox="0 0 24 22"><path d="M0.5 3.5 L10.5 1.5 L13 11 L2.5 13.5Z" fill="#1a7ef0" stroke="#222" stroke-width="0.9" stroke-linejoin="round"/><path d="M2.5 13.5 L13 11 L13 14 L3 17Z" fill="#1050c0" stroke="#222" stroke-width="0.8" stroke-linejoin="round"/><path d="M7.6 5.5 L17 3.8 L22 13.4 L9.8 16.2Z" fill="#7d796b" stroke="#222" stroke-width="0.9" stroke-linejoin="round"/><path d="M9.8 16.2 L22 13.4 L22 16.5 L10 20Z" fill="#57544a" stroke="#222" stroke-width="0.8" stroke-linejoin="round"/><path d="M8 6 L12 5.3 L13 10.5 L9 11.5Z" fill="#d4d4d4" stroke="#222" stroke-width="0.7"/></svg>
<div class="a" style="left:4px;top:123px;width:64px;height:2px;background:repeating-linear-gradient(90deg,#b4b4b4 0 2px,transparent 2px 4px)"></div><div class="a" style="left:2px;top:129px;width:34px;height:33px;background:#cce4f7;border:1px solid #99c9ef"></div><svg style="left:13px;top:136px" width="17" height="22" viewBox="0 0 17 22"><path d="M2.5 2.4 L2.5 18.6 L6.3 15 L9.3 20.5 L11.8 19.3 L9 13.6 L14.2 13.4Z" fill="#000" stroke="#fff" stroke-width="1"/></svg><svg style="left:41px;top:134px" width="24" height="25" viewBox="0 0 24 25"><path d="M1.5 3.5 L13 1 L23 3 L21 18 L8 23 L2 14Z M1.5 3.5 L9 7 L23 3 M9 7 L8 23 M4 6 L10 9.5 L21 6 M3.5 11 L9.5 13 L21.5 9.5 M10 15 L15 12 L19 14 M13 18 L17 16" fill="none" stroke="#aaa" stroke-width="1.1" stroke-linejoin="round"/></svg><svg style="left:4px;top:166px" width="26" height="26" viewBox="0 0 26 26"><path d="M19 7 C22 4 26.5 6 24.5 10.5" fill="none" stroke="#111" stroke-width="1.2"/><path d="M5 8 C8 2 18 1 21 6 L24 15 C25 20 20 24 14 23 L8 20 C5 18 4 13 5 8Z" fill="#3c3c3c" stroke="#111" stroke-width="1.1"/><path d="M6 8 C9 4 17 3 19.5 6.5 C17 9 10 10 6 8Z" fill="#8c8c8c"/><path d="M20 9 L22 14 L20 15 L18.5 10.5Z" fill="#a8a48c"/><path d="M10 17.5 L19 14.5 L21 20 C19 23 15 23 12 22Z" fill="#f2d48e"/><path d="M3 17 C6 14 10 13 13.5 11.5 L12.5 15 C9.5 16 7.5 18 6.5 22 C6 25 3.5 25 2.5 22.5 C1.8 20 2 18 3 17Z" fill="#f8c800" stroke="#111" stroke-width="1"/></svg><svg style="left:40px;top:166px" width="25" height="27" viewBox="0 0 25 27"><path d="M2.1 17.1 L15.1 2.2 L23.8 4.2 L11 19.5Z" fill="#f6b0ba"/><path d="M2.1 17.1 L11 19.5 L12.5 25.2 L1.5 19.4Z" fill="#f28c9a"/><path d="M11 19.5 L23.8 4.2 L22.5 8.5 L12.5 25.2Z" fill="#c05a66"/><path d="M2.1 17.1 L15.1 2.2 L23.8 4.2 L22.5 8.5 L12.5 25.2 L1.5 19.4Z M2.1 17.1 L11 19.5 L23.8 4.2 M11 19.5 L12.5 25.2" fill="none" stroke="#111" stroke-width="1.1" stroke-linejoin="round"/><path d="M9 15 L17 6" stroke="#844" stroke-width="1.4" stroke-dasharray="1.5 1"/></svg><div class="a" style="left:4px;top:199px;width:64px;height:1px;background:#a0a0a0"></div><svg style="left:7px;top:209px" width="25" height="25" viewBox="0 0 25 25"><path d="M2 23 L5 16.5 L20 2.5 C21 1.5 23 3 22.5 4.5 L8 19.5Z" fill="#d41e22" stroke="#222" stroke-width="1"/><path d="M5 16.5 L20.5 4.5 L22 4" stroke="#f06060" stroke-width="0.8"/><path d="M2 23 L5 16.5 L8 19.5Z" fill="#e8d8b0" stroke="#222" stroke-width="0.8"/><path d="M2 23 L3.2 20.2 L4.8 21.6Z" fill="#222"/></svg><svg style="left:40px;top:207px" width="28" height="28" viewBox="0 0 28 28"><path d="M2.5 25 C1 20 4 14 7 11 C9 8 4 6 7 4.5 C10 3 14 6 15 10 C16 14 18 19 21 18 C25 17 25 10 23 5" fill="none" stroke="#b01018" stroke-width="1.8"/><circle cx="2.7" cy="25.5" r="2" fill="#e8141c"/><circle cx="23" cy="4.5" r="2" fill="#e8141c"/></svg><svg style="left:8px;top:243px" width="22" height="24" viewBox="0 0 22 24"><rect x="2" y="2" width="17" height="19" fill="#a39f8a" stroke="#222" stroke-width="1.2"/><path d="M2 21 L19 2" stroke="#e8141c" stroke-width="1.1"/><circle cx="2" cy="21" r="1.8" fill="#e8141c"/><circle cx="19" cy="2" r="1.8" fill="#e8141c"/></svg><svg style="left:42px;top:243px" width="22" height="24" viewBox="0 0 22 24"><path d="M2 2 H19 V21 H2Z" fill="#a39f8a" stroke="#222" stroke-width="1.2"/><path d="M2 2 C12 2 19 9 19 21" fill="none" stroke="#fff" stroke-width="1.2"/><path d="M2 2 V21 H19" fill="none" stroke="#e8141c" stroke-width="1.1"/><circle cx="2" cy="2" r="1.8" fill="#e8141c"/><circle cx="2" cy="21" r="1.8" fill="#e8141c"/><circle cx="19" cy="21" r="1.8" fill="#e8141c"/></svg><svg style="left:7px;top:278px" width="24" height="24" viewBox="0 0 24 24"><circle cx="11.75" cy="11.9" r="11" fill="#a39f8a" stroke="#222" stroke-width="1"/><path d="M11.75 11.9 L19.9 4" stroke="#e8141c" stroke-width="1"/><circle cx="11.75" cy="11.9" r="2.4" fill="#fff" opacity="0.7"/><circle cx="11.75" cy="11.9" r="1.6" fill="#e8141c"/><circle cx="19.9" cy="4" r="1.7" fill="#e8141c"/></svg><svg style="left:41px;top:278px" width="24" height="24" viewBox="0 0 24 24"><path d="M7 2.3 L20.1 4.4 L21.2 18 L10 22.5 L1.4 12.3Z" fill="#a39f8a" stroke="#222" stroke-width="1"/><circle cx="11.9" cy="11.9" r="11" fill="none" stroke="#e8141c" stroke-width="1"/><path d="M11.9 11.9 L20.1 4.4" stroke="#e8141c" stroke-width="1"/><circle cx="11.9" cy="11.9" r="2.4" fill="#fff" opacity="0.7"/><circle cx="11.9" cy="11.9" r="1.6" fill="#e8141c"/><circle cx="20.1" cy="4.4" r="1.7" fill="#e8141c"/></svg><svg style="left:7px;top:311px" width="24" height="24" viewBox="0 0 24 24"><path d="M2 22 L21 2 M2 2 H21" stroke="#e8141c" stroke-width="1.1"/><path d="M2 22 C14 20 21 12 21 2" fill="none" stroke="#222" stroke-width="1.2"/><circle cx="2" cy="2" r="1.8" fill="#e8141c"/><circle cx="21" cy="2" r="1.8" fill="#e8141c"/><circle cx="2" cy="22" r="1.8" fill="#e8141c"/></svg><svg style="left:41px;top:311px" width="24" height="24" viewBox="0 0 24 24"><path d="M5 22 C1 14 6 3 13 4 C18 5 22 9 22 12" fill="none" stroke="#222" stroke-width="1.2"/><path d="M5 22 L22 12 M5 22 L3 8" stroke="#e8141c" stroke-width="1.1"/><circle cx="22" cy="12" r="1.8" fill="#e8141c"/><circle cx="5" cy="22" r="1.8" fill="#e8141c"/><circle cx="4" cy="9" r="1.8" fill="#e8141c"/></svg><svg style="left:7px;top:345px" width="24" height="25" viewBox="0 0 24 25"><path d="M14 2 C21 6 23 16 18 22 C12 25 5 23 2 18" fill="none" stroke="#222" stroke-width="1.1"/><path d="M2 18 L18 22 L7 3" stroke="#e8141c" stroke-width="1.1" fill="none"/><circle cx="7" cy="3" r="1.7" fill="#e8141c"/><circle cx="2" cy="18" r="1.7" fill="#e8141c"/><circle cx="18" cy="22" r="1.7" fill="#e8141c"/></svg><svg style="left:41px;top:345px" width="24" height="25" viewBox="0 0 24 25"><path d="M2 5 H21 C21 14 14 21 2 22Z" fill="#a39f8a" stroke="#222" stroke-width="1.1"/><path d="M2 5 H21 M2 22 L21 5" stroke="#e8141c" stroke-width="1.1"/><circle cx="2" cy="5" r="1.7" fill="#e8141c"/><circle cx="21" cy="5" r="1.7" fill="#e8141c"/><circle cx="2" cy="22" r="1.7" fill="#e8141c"/></svg><div class="a" style="left:4px;top:377px;width:64px;height:1px;background:#a0a0a0"></div><svg style="left:7px;top:388px" width="24" height="24" viewBox="0 0 24 24"><path d="M12 0.8 L17 6 H14 V10 H18 V7 L23.2 12 L18 17 V14 H14 V18 H17 L12 23.2 L7 18 H10 V14 H6 V17 L0.8 12 L6 7 V10 H10 V6 H7Z" fill="#e8141c" stroke="#5a0000" stroke-width="0.6" stroke-linejoin="round"/><path d="M7 7 L12 2 L17 7 L22 12 L17 17 L12 22 L7 17 L2 12Z" fill="#e8141c"/><rect x="8" y="8" width="2.6" height="2.6" fill="#fff"/><rect x="13.4" y="8" width="2.6" height="2.6" fill="#fff"/><rect x="8" y="13.4" width="2.6" height="2.6" fill="#fff"/><rect x="13.4" y="13.4" width="2.6" height="2.6" fill="#fff"/><circle cx="12" cy="12" r="1" fill="#fff"/></svg><svg style="left:40px;top:387px" width="26" height="25" viewBox="0 0 26 25"><path d="M1.2 14.7 L12 21 V23.5 L1.2 17Z" fill="#555248" stroke="#111" stroke-width="0.8"/><path d="M12 21 L25 14.5 V17 L12 23.5Z" fill="#6e6b5e" stroke="#111" stroke-width="0.8"/><path d="M1.2 14.7 L14 7.5 L25 14.5 L12 21Z" fill="#a39f8a" stroke="#111" stroke-width="1.1" stroke-linejoin="round"/><path d="M13 1.5 L18.5 9 H15.5 V15.5 H10.5 V9 H7.5Z" fill="#e8141c" stroke="#fff" stroke-width="0.7"/></svg><svg style="left:7px;top:421px" width="24" height="24" viewBox="0 0 24 24"><path d="M3 10 C4 4 12 1 18 5 L20 2 L22 10 L14 9 L16 7 C12 5 7 7 6 11Z" fill="#e8141c" stroke="#600" stroke-width="0.6"/><path d="M21 14 C20 20 12 23 6 19 L4 22 L2 14 L10 15 L8 17 C12 19 17 17 18 13Z" fill="#e8141c" stroke="#600" stroke-width="0.6"/></svg><svg style="left:40px;top:421px" width="26" height="25" viewBox="0 0 26 25"><path d="M2 19 C1 10 8 3 18 2 C23 2 25.5 4 24.5 8 L22 10 C20 8.5 17.5 8.5 14.5 9.5 C10.5 11.5 8.5 15.5 9 21 C8 23.5 4 23.5 2 19Z" fill="#8c8876" stroke="#111" stroke-width="1.2" stroke-linejoin="round"/><path d="M4.5 18 C4 11 9 6 17 4.5" fill="none" stroke="#333" stroke-width="0.8"/><path d="M21 5.5 C16 5.5 11 8.5 10 13.5 L7 12.5 L9.5 19.5 L16 15 L13 14.5 C14 11 17 9 21 9Z" fill="#e8141c" stroke="#500" stroke-width="0.6"/></svg><svg style="left:7px;top:455px" width="26" height="26" viewBox="0 0 26 26"><rect x="0.5" y="1.3" width="24" height="23.2" fill="none" stroke="#f04050" stroke-width="0.9"/><rect x="1" y="7" width="18" height="17.5" fill="#a39f8a" stroke="#222" stroke-width="1.1"/><path d="M24.5 1.5 L22 11 L19 8.5 L14 14 L10.5 11 L15.5 5.5 L13 3Z" fill="#e8141c" stroke="#fff" stroke-width="0.7" stroke-linejoin="round"/></svg><svg style="left:41px;top:455px" width="26" height="26" viewBox="0 0 26 26"><path d="M1 6.5 C10 1.5 21 5 24 13 C25.5 18 24 22.5 20.5 25" fill="none" stroke="#e8141c" stroke-width="1.2"/><path d="M3.5 18 C3.5 13.5 7 10 11 9" fill="none" stroke="#333" stroke-width="1.2"/><path d="M12.5 22.5 C14.5 19.5 16 17.5 16.5 14" fill="none" stroke="#333" stroke-width="1.2"/><path d="M22 1.5 L20 11 L17 8.5 L12.5 13.5 L9.5 10.5 L14 5.5 L11.5 3.5Z" fill="#e8141c" stroke="#fff" stroke-width="0.7" stroke-linejoin="round"/></svg><div class="a" style="left:4px;top:488px;width:64px;height:1px;background:#a0a0a0"></div><svg style="left:8px;top:497px" width="23" height="25" viewBox="0 0 23 25"><path d="M10 14 L2.5 19.2" stroke="#111" stroke-width="4.2" stroke-linecap="round"/><path d="M10 14 L3 18.8" stroke="#f2c01a" stroke-width="2.4"/><path d="M1.8 17.5 L4.5 22.5" stroke="#111" stroke-width="2.6" stroke-linecap="round"/><path d="M8.7 6.3 L13.3 2.2 L19.8 2.2 L21.6 5.4 L19.8 14.7 L13.3 17.4 L8.7 13.7Z" fill="#2a2a2a" stroke="#111" stroke-width="1"/><path d="M12.5 5 L18 3.5 L20 6 L18.5 13 L13 15.5 L11 12Z" fill="#9a9a9a"/><path d="M14.5 5.5 L18.5 4.5 L18.8 8 L16.5 12.5 L13.8 11.5Z" fill="#f2c01a"/></svg><svg style="left:42px;top:497px" width="24" height="24" viewBox="0 0 24 24"><path d="M3.4 15.1 L13.6 5.4 M3.4 15.1 L11 22.5 M13.6 5.4 L20.5 12.8" stroke="#111" stroke-width="1"/><path d="M1.4 13.1 L5.4 17.1 M5.4 13.1 L1.4 17.1 M11.6 3.4 L15.6 7.4 M15.6 3.4 L11.6 7.4" stroke="#111" stroke-width="1.3"/><circle cx="11" cy="22.5" r="1.5" fill="#19b519"/><circle cx="20.5" cy="12.8" r="1.5" fill="#19b519"/><path d="M7.5 2.8 H3.5 L3 5.3 C5 4.8 7 5.5 6.8 7 C6.5 8.7 4.5 9 2.5 8.2" fill="none" stroke="#333" stroke-width="0.9"/></svg><svg style="left:8px;top:532px" width="23" height="23" viewBox="0 0 23 23"><path d="M4 21 L22 4.5 C14 -1 0 5 4 21Z" fill="#f2c01a" stroke="#222" stroke-width="1.3"/><path d="M7.5 15.5 L16.5 7 C11 5 5 8 7.5 15.5Z" fill="#f4f4f4" stroke="#333" stroke-width="0.8"/><path d="M5 12 L7 12.5 M6.5 8 L8.5 9 M10 4.5 L11 6.5 M14.5 3 L14.5 5" stroke="#444" stroke-width="0.7"/></svg><svg style="left:42px;top:532px" width="24" height="23" viewBox="0 0 24 23"><rect x="6" y="1" width="16" height="11" fill="#fff" stroke="#111" stroke-width="1"/><text x="14" y="10" font-size="8" text-anchor="middle" font-family="Liberation Serif" fill="#111">A1</text><path d="M3 7 V20" stroke="#111" stroke-width="0.9"/><path d="M1 17 L3 22 L5 17Z" fill="#111"/><path d="M3 7 H6" stroke="#111" stroke-width="0.9"/></svg><svg style="left:8px;top:565px" width="22" height="25" viewBox="0 0 22 25"><path d="M9 14.3 L2.2 9.6" stroke="#e03030" stroke-width="1.2" stroke-dasharray="1.3 1.3"/><path d="M9 14.3 L2.2 18.9" stroke="#40b040" stroke-width="1.2" stroke-dasharray="1.3 1.3"/><path d="M9 14.5 V22.6" stroke="#a8d0e0" stroke-width="2"/><path d="M9 14.3 V6.5" stroke="#1050b0" stroke-width="2.2"/><path d="M6 7.5 L9 2.5 L12 7.5Z" fill="#1050b0"/><path d="M9 14.3 L16 9.8" stroke="#30a040" stroke-width="1.6"/><path d="M14.2 8.2 L19.5 7.3 L16.8 11.8Z" fill="#30a040"/><path d="M9 14.3 L16 18.8" stroke="#e01818" stroke-width="1.6"/><path d="M14.5 20.5 L19.5 21 L17 16.5Z" fill="#e01818"/><circle cx="9" cy="14.3" r="1.8" fill="#111"/></svg><svg style="left:42px;top:565px" width="23" height="25" viewBox="0 0 23 25"><path d="M1 17 L10 1.5 L14 1.2 L21 22.5 L17.5 23.5 L15 16 L9 16.5 L5.5 20.5Z" fill="#4a4840" stroke="#111" stroke-width="1" stroke-linejoin="round"/><path d="M0.6 16 L9.4 1 L13 1 L19.5 21 L16.5 21.5 L14 14.5 L8.5 15 L4 19Z" fill="#8f8b78" stroke="#111" stroke-width="1" stroke-linejoin="round"/><path d="M9.5 11.5 L11.5 5 L13 11Z" fill="#f0f0f0" stroke="#111" stroke-width="0.7"/></svg><div class="a" style="left:4px;top:597px;width:64px;height:1px;background:#a0a0a0"></div><svg style="left:7px;top:606px" width="25" height="26" viewBox="0 0 25 26"><path d="M12 1 V25" stroke="#111" stroke-width="2.2"/><path d="M12 7 C5 7 1 10 2 14 C3 18 8 20 12 20" fill="none" stroke="#d01515" stroke-width="3"/><path d="M13 7 C19 7 23 10 23 13 C23 17 18 19 13 19" fill="none" stroke="#28a050" stroke-width="3"/><path d="M3 14 L6 20 L1 20Z" fill="#d01515"/><path d="M20 7 L23 12 L17 11Z" fill="#28a050"/></svg><svg style="left:41px;top:607px" width="24" height="23" viewBox="0 0 24 23"><path d="M3 21 C5 18 3 13 7 10 L11 3 C12 1 14 2 13 4 L11 8 L15 2 C16 0 18 1 17 3 L14 9 L19 3 C20 2 22 3 21 5 L16 11 L20 8 C22 7 23 9 21 10 C18 13 17 16 13 19 C10 21 6 22 3 21Z" fill="#f8e4a8" stroke="#555" stroke-width="1"/></svg><svg style="left:7px;top:641px" width="24" height="25" viewBox="0 0 24 25"><circle cx="15" cy="9" r="7" fill="#9cc8f0" stroke="#222" stroke-width="1.8"/><path d="M10 14 L2 22" stroke="#222" stroke-width="3.2" stroke-linecap="round"/></svg><svg style="left:41px;top:641px" width="24" height="25" viewBox="0 0 24 25"><rect x="1" y="1" width="22" height="22" fill="none" stroke="#e01010" stroke-width="1.6"/><circle cx="14" cy="9" r="6" fill="#9cc8f0" stroke="#222" stroke-width="1.8"/><path d="M9.5 13.5 L3 20" stroke="#222" stroke-width="3" stroke-linecap="round"/></svg><svg style="left:7px;top:676px" width="24" height="24" viewBox="0 0 24 24"><circle cx="12" cy="12" r="5.5" fill="#9cc8f0" stroke="#222" stroke-width="1.6"/><path d="M8 16 L3 21" stroke="#222" stroke-width="2.8" stroke-linecap="round"/><path d="M1 1 L7 2 L2 7Z M23 1 L17 2 L22 7Z M23 23 L17 22 L22 17Z" fill="#e01010"/><path d="M3 3 L7 7 M21 3 L17 7 M21 21 L17 17" stroke="#e01010" stroke-width="1.6"/></svg><svg style="left:41px;top:676px" width="24" height="24" viewBox="0 0 24 24"><path d="M21 21 L13 13" stroke="#aaa" stroke-width="3"/><circle cx="11" cy="11" r="5" fill="#ddd" stroke="#aaa" stroke-width="1.4"/><path d="M3 10 C3 4 9 1 14 3 L14 0 L19 5 L14 9 L14 6 C10 5 7 7 7 10Z" fill="#ccc" stroke="#aaa" stroke-width="0.8"/></svg><div class="a" style="left:4px;top:707px;width:64px;height:1px;background:#a0a0a0"></div><svg style="left:11px;top:717px" width="16" height="25" viewBox="0 0 16 25"><circle cx="8" cy="3" r="2" fill="#fff" stroke="#333" stroke-width="0.9"/><path d="M5 7 H11 L12 14 H10 L10 20 H6 L6 14 H4Z" fill="#fff" stroke="#333" stroke-width="0.9"/><path d="M2 19 L14 24 M14 19 L2 24" stroke="#e01010" stroke-width="1.2"/></svg><svg style="left:40px;top:719px" width="26" height="20" viewBox="0 0 26 20"><path d="M1 11 C7 3 19 3 25 10 C19 17 7 17 1 11Z" fill="#fff" stroke="#222" stroke-width="1.2"/><circle cx="13" cy="10" r="4.5" fill="#222"/><circle cx="12" cy="9" r="1.2" fill="#fff"/><path d="M2 8 C8 -1 20 0 25 7" fill="none" stroke="#555" stroke-width="1.5"/></svg><svg style="left:8px;top:751px" width="22" height="25" viewBox="0 0 22 25"><ellipse cx="5" cy="14" rx="4" ry="7" fill="#111"/><ellipse cx="15" cy="9" rx="4" ry="7" fill="#111" transform="rotate(15 15 9)"/><path d="M3 22 L6 22 M13 17 L16 17" stroke="#fff" stroke-width="1"/></svg><svg style="left:42px;top:752px" width="22" height="22" viewBox="0 0 22 22"><circle cx="11" cy="11" r="7" fill="#fff" stroke="#111" stroke-width="1.1"/><path d="M0.5 11 H19" stroke="#111" stroke-width="1.6"/><path d="M11 1 L21 11 L11 21" fill="none" stroke="#111" stroke-width="1.8"/><text x="11" y="9" font-size="6" text-anchor="middle" font-family="Liberation Serif" fill="#111">G</text><text x="11" y="17" font-size="5" text-anchor="middle" font-family="Liberation Serif" fill="#111">RR</text></svg>
<svg style="left:700px;top:410px" width="100" height="235" viewBox="0 0 100 235"><g stroke="#151515" stroke-width="1.5" stroke-linejoin="round"><path d="M30.5 113 L75 111 L77 150 L76.5 185 L77.5 200 L76 217 L59 217 L57 185 L53 136 L51 136 L49 185 L48.5 217 L31.5 217 L29.5 190 L29 150 Z" fill="#787174"/><path d="M31 195 L48 188 M59 195 L76 190" stroke-width="0.8" fill="none"/><path d="M31 215 L49 215 L49 224 L44 227 L30 227 L29 222 Z" fill="#4d5b7e"/><path d="M59 214 L76 214 L85 221 L84 226 L60 226 Z" fill="#4d5b7e"/><path d="M15.7 71.5 L13 88 C14 96 18 101 21.3 104.8 L30.5 116 L47 118.7 L40 113 C37 111 33 109 30.5 104.8 C27 100 25 95 22 90 L26.8 79 L26.8 70.5Z" fill="#f5dcc8"/><path d="M79.6 70.5 L82.4 90 C82 100 79 106 76 110.4 L71.3 116.8 L60 117.8 L66 113 L71.3 106.7 L70.4 79 L70.4 69.6Z" fill="#f5dcc8"/><path d="M37 45.5 L22 51 L15.7 71.5 L26.8 70.5 L30.5 114 L71 110 L70.4 69.6 L79.6 70.5 L72 50 L56.5 45.5 C52 49 42 49 37 45.5Z" fill="#7083d4"/><path d="M30.5 104.8 C33 109 37 111 40 113 L47 118.7 L36 117.5 L30.5 116Z M71.3 106.7 L66 113 L60 117.8 L71.3 116.8 L74 113Z" fill="#f5dcc8"/><path d="M38 38 L38 47 C42 51 53 51 57 47 L56 38Z" fill="#f5dcc8"/><path d="M31 25 C30 14 37 9.5 45 9.5 C53 9.5 58.5 14 58 22 L57.5 33 C56 40 52 43.5 47 43.5 C42 43 38.5 40 36.5 36 C35 33 34 30.5 33.5 28.5 C31.5 28 31 26.5 31 25Z" fill="#f5dcc8"/><path d="M31.5 26 C30 14 37 9.5 45 9.5 C53 9.5 57.5 13 58 19 L57 24 C56 19 53 15.5 49 15.5 C44 16.5 40 21 37.5 26 L34 27Z" fill="#8e8e8e" stroke="none"/><path d="M37 29.5 C38 35 40.5 40.5 47 43 C53 42 57.5 37 57.5 30 L56 33.5 C53 31.5 49 31.5 45 32.5 C41 33 39 31 37 29.5Z" fill="#8e8e8e" stroke="none"/><path d="M31 25 C30 14 37 9.5 45 9.5 C53 9.5 58.5 14 58 22 L57.5 33 C56 40 52 43.5 47 43.5 C42 43 38.5 40 36.5 36 C35 33 34 30.5 33.5 28.5 C31.5 28 31 26.5 31 25Z" fill="none"/></g><path d="M36 24.5 H57" stroke="#222" stroke-width="1"/><ellipse cx="42.5" cy="25.8" rx="3.3" ry="1.7" fill="none" stroke="#333" stroke-width="1"/><ellipse cx="52.5" cy="25.8" rx="3.3" ry="1.7" fill="none" stroke="#333" stroke-width="1"/><path d="M36.5 66 C39 62 43 59 47 60 C49 61 50 63 51 64 C53 66 55 66 57 66 C60 66 63 68 64 70 C66 70 68 70 69 69 C69 72 66 74 63 75 C60 77 57 79 55 79 C54 76 57 74 60 73 C57 72 54 70 52 69 C52 73 53 77 52 80 C50 80 48 78 48 74 C48 71 49 69 48 67 C46 66 43 67 40 67 Z" fill="#b4c0f4"/></svg>
<div class="a" style="left:4px;top:978px;width:2px;height:33px;background:repeating-linear-gradient(#b4b4b4 0 2px,transparent 2px 4px)"></div><svg style="left:5px;top:1018px" width="16" height="16" viewBox="0 0 16 16"><circle cx="8" cy="8" r="7" fill="none" stroke="#aaa" stroke-width="1"/><path d="M5 5 C5 2 11 2 11 5 C11 8 9 9 8 13 C7 9 5 8 5 5Z" fill="#999"/></svg><svg style="left:35px;top:1018px" width="16" height="16" viewBox="0 0 16 16"><circle cx="8" cy="8" r="6.8" fill="none" stroke="#111" stroke-width="1.4"/><circle cx="8" cy="4.6" r="1.4" fill="#111"/><path d="M6 7 H10 L9.5 10 H8.8 V12.5 H7.2 V10 H6.5Z" fill="#111"/></svg><div class="a" style="left:62px;top:1022px;width:1px;height:9px;background:#777"></div>
<svg style="left:16px;top:1052px" width="17" height="17" viewBox="0 0 17 17"><path d="M0 2.5 L7 1.5 V8 H0Z M8 1.3 L16.5 0 V8 H8Z M0 9 H7 V15.5 L0 14.5Z M8 9 H16.5 V17 L8 15.7Z" fill="#fff"/></svg><svg style="left:63px;top:1049px" width="23" height="23" viewBox="0 0 23 23"><path d="M6 1 L21 3 L21 20 L16 22 L1 17Z" fill="#b9dbee" stroke="#d8e8f0" stroke-width="1"/><path d="M6 1 L1 17 L6 20 L10 6Z" fill="#5a8aa8"/><path d="M8 4 L19 6 L18 18 L4 15Z" fill="#8ec2e0"/></svg><svg style="left:112px;top:1048px" width="25" height="25" viewBox="0 0 25 25"><circle cx="12.5" cy="12.5" r="12" fill="#2e9a44"/><path d="M12.5 0.5 A12 12 0 0 1 23.5 8 L12.5 8 C9 8 6.5 10 5.5 12 L2.5 6 A12 12 0 0 1 12.5 0.5Z" fill="#e5402f"/><path d="M23.5 8 A12 12 0 0 1 11 24.5 L17 14 C18 12 17.5 9.5 16 8Z" fill="#f4c020"/><circle cx="12.5" cy="12.5" r="5.5" fill="#fff"/><circle cx="12.5" cy="12.5" r="4.5" fill="#2a8ae0"/><text x="12.5" y="15.5" font-size="8" font-weight="bold" text-anchor="middle" font-family="Liberation Sans" fill="#fff">e</text></svg><svg style="left:161px;top:1050px" width="24" height="20" viewBox="0 0 24 20"><path d="M1 2 H9 L11 4 H23 V18 H1Z" fill="#f9dc8c"/><path d="M1 3 H9" stroke="#e8b84a" stroke-width="2"/><path d="M6 11 H18 V18 H15 V14 H9 V18 H6Z" fill="#4a9ef0"/></svg><svg style="left:210px;top:1048px" width="25" height="25" viewBox="0 0 25 25"><rect x="0" y="0" width="24" height="24" rx="2" fill="#5aae1a"/><path d="M5 4 H20 L17 8 H9 V16 H17 L20 20 H5Z" fill="#fff"/></svg><svg style="left:258px;top:1048px" width="26" height="24" viewBox="0 0 26 24"><ellipse cx="11" cy="14" rx="10" ry="8" fill="#c8e0f0"/><circle cx="6" cy="14" r="2" fill="#e03030"/><circle cx="9" cy="10" r="1.8" fill="#40b040"/><circle cx="13" cy="8" r="1.8" fill="#f0b020"/><circle cx="11" cy="16" r="2" fill="#222"/><path d="M13 22 L24 2" stroke="#e0a040" stroke-width="2.5"/></svg><svg style="left:308px;top:1048px" width="25" height="25" viewBox="0 0 25 25"><rect width="24" height="24" fill="#4a90b8"/><path d="M0 0 H24 V24 L10 0Z" fill="#7ab8d8"/><path d="M6 5 H15 L20 11 L14 18 H6 L11 11Z" fill="#1c2e44"/><rect x="7" y="20" width="11" height="3" fill="#e8f0f8"/></svg><div class="a" style="left:300px;top:1078px;width:40px;height:2px;background:#76b9ed"></div><svg style="left:357px;top:1048px" width="25" height="25" viewBox="0 0 25 25"><rect width="24" height="24" fill="#7a8890"/><path d="M5 6 C8 2 18 2 20 7 C22 12 18 20 12 21 C7 20 3 12 5 6Z" fill="#d89a50"/><circle cx="10" cy="9" r="2" fill="#333"/><circle cx="16" cy="9" r="2" fill="#333"/></svg><div class="a" style="left:349px;top:1078px;width:40px;height:2px;background:#76b9ed"></div><div class="a" style="left:394px;top:1040px;width:48px;height:40px;background:#3a3a3a"></div><div class="a" style="left:394px;top:1078px;width:48px;height:2px;background:#76b9ed"></div><svg style="left:407px;top:1049px" width="22" height="22" viewBox="0 0 22 22"><path d="M1 5 L12 1 L21 6 L20 16 L9 21 L2 17Z" fill="#e01e24"/><path d="M3 5 L12 2 L18 5 L13 7 L10 6 L6 8Z M5 10 L11 8 L14 9 L8 12Z M6 14 L9 13 L10 14 L7 16Z" fill="#fff"/></svg><svg style="left:1657px;top:1051px" width="17" height="17" viewBox="0 0 17 17"><ellipse cx="7" cy="8" rx="5" ry="7" fill="#222"/><ellipse cx="7" cy="10" rx="3.5" ry="5" fill="#fff"/><path d="M3 7 H11 L8 10Z" fill="#f0a000"/><path d="M2 8 C4 10 10 10 12 8 L12 11 L3 11Z" fill="#e02020"/><circle cx="12.5" cy="12.5" r="4.5" fill="#f0a040"/><path d="M10 11 H15 M10 13 H15" stroke="#fff" stroke-width="0.8"/></svg><svg style="left:1681px;top:1051px" width="16" height="17" viewBox="0 0 16 17"><path d="M8 0.5 L15 3 V9 C15 13 11 16 8 16.5 C5 16 1 13 1 9 V3Z" fill="#40a030" stroke="#c0c0c0" stroke-width="1.2"/><path d="M9 3 L5 9 H8 L7 14 L11 7 H8Z" fill="#f0f0f0"/></svg><svg style="left:1705px;top:1051px" width="17" height="17" viewBox="0 0 17 17"><path d="M3 14 C0 10 4 2 10 1 C14 5 16 12 12 16 C9 17 5 16 3 14Z" fill="#222" stroke="#ddd" stroke-width="1"/><circle cx="7" cy="12" r="3" fill="#ddd"/></svg><svg style="left:1729px;top:1052px" width="16" height="16" viewBox="0 0 16 16"><rect width="16" height="16" fill="#3c3c3c"/><rect x="1.5" y="2.5" width="13" height="11" fill="#4a6a1a"/><path d="M2 8 C4 4.5 11 4.5 13.5 8 C11 11.5 5 11.5 3.5 9 C5 7 9 6.5 10.5 8.5" fill="none" stroke="#8ac000" stroke-width="1.4"/></svg><svg style="left:1755px;top:1051px" width="15" height="17" viewBox="0 0 15 17"><rect x="1" y="4" width="7" height="12" fill="none" stroke="#fff" stroke-width="1"/><rect x="2" y="1" width="5" height="3" fill="none" stroke="#fff" stroke-width="1"/><path d="M9 14 L11 16 L14 12" fill="none" stroke="#bbb" stroke-width="1"/></svg><svg style="left:1777px;top:1052px" width="17" height="16" viewBox="0 0 17 16"><rect x="4" y="2" width="12" height="9" fill="none" stroke="#fff" stroke-width="1"/><path d="M10 11 V14 M6 14.5 H14 M1 2 V15 M1 2 H4" stroke="#fff" stroke-width="1"/><rect x="1" y="3" width="2.5" height="2.5" fill="#fff"/></svg><svg style="left:1801px;top:1052px" width="17" height="16" viewBox="0 0 17 16"><path d="M1 5 H4 L8 1.5 V14.5 L4 11 H1Z" fill="none" stroke="#fff" stroke-width="1"/><path d="M10.5 5 C11.5 6.5 11.5 9.5 10.5 11 M12.5 3.5 C14.3 6 14.3 10 12.5 12.5 M14.5 2 C17 5.5 17 10.5 14.5 14" fill="none" stroke="#fff" stroke-width="1"/></svg><svg style="left:1825px;top:1051px" width="17" height="17" viewBox="0 0 17 17"><path d="M7 1 L13 3 V8 C13 12 10 14 7 15 C4 14 1 12 1 8 V3Z" fill="#fff"/><path d="M7 1 V15 M1 8 H13" stroke="#111" stroke-width="1"/><circle cx="12" cy="12.5" r="4" fill="#2ea44f"/><path d="M10 12.5 L11.5 14 L14 11" fill="none" stroke="#fff" stroke-width="1"/></svg><div class="t" style="left:1849px;top:1052px;font-size:13px;line-height:15px;color:#fff;-webkit-text-stroke:0.2px #fff">中</div><svg style="left:1879px;top:1052px" width="17" height="17" viewBox="0 0 17 17"><path d="M1 1 H16 V12 H10 L8.5 14.5 L7 12 H1Z" fill="none" stroke="#fff" stroke-width="1"/></svg><div class="a" style="left:1915px;top:1040px;width:1px;height:40px;background:#5a5a5a"></div>
<div class="a" style="left:267px;top:42px;width:211px;height:517px;background:#f0f0f0;border:1px solid #cccccc;border-right-color:#6a6a6a;border-bottom-color:#6a6a6a;box-shadow:1px 1px 1px rgba(0,0,0,0.22),2px 2px 2px rgba(0,0,0,0.12)"></div><div class="a" style="left:270px;top:45px;width:22px;height:21px;background:#90c8f6"></div><svg style="left:275px;top:49px" width="12" height="11" viewBox="0 0 12 11"><path d="M1 5.5 L4.5 9 L11 2" fill="none" stroke="#333" stroke-width="1.4"/></svg><div class="t" style="left:302px;top:49px">选择(S)</div><div class="t" style="right:1464px;top:49px;text-align:right">均分图元</div><div class="t" style="left:302px;top:71px">橡皮擦(E)</div><div class="t" style="right:1464px;top:71px;text-align:right">E</div><div class="t" style="left:302px;top:93px">材质(I)</div><div class="t" style="right:1464px;top:93px;text-align:right">B</div><div class="a" style="left:298px;top:114px;width:176px;height:1px;background:#d4d4d4"></div><div class="t" style="left:302px;top:122px">移动(V)</div><div class="t" style="right:1464px;top:122px;text-align:right">M</div><div class="t" style="left:302px;top:144px">旋转(T)</div><div class="t" style="right:1464px;top:144px;text-align:right">Q</div><div class="t" style="left:302px;top:166px">缩放(C)</div><div class="t" style="right:1464px;top:166px;text-align:right">S</div><div class="a" style="left:298px;top:187px;width:176px;height:1px;background:#d4d4d4"></div><div class="t" style="left:302px;top:195px">推/拉(P)</div><div class="t" style="right:1464px;top:195px;text-align:right">P</div><div class="t" style="left:302px;top:217px">路径跟随(F)</div><div class="t" style="left:302px;top:239px">偏移(O)</div><div class="t" style="right:1464px;top:239px;text-align:right">F</div><div class="a" style="left:298px;top:260px;width:176px;height:1px;background:#d4d4d4"></div><div class="t" style="left:302px;top:268px">外壳(S)</div><div class="t" style="left:302px;top:290px">实体工具(T)</div><svg style="left:460px;top:292px" width="6" height="9" viewBox="0 0 6 9"><path d="M1 1 L4.5 4.5 L1 8" fill="none" stroke="#333" stroke-width="1.2"/></svg><div class="a" style="left:298px;top:311px;width:176px;height:1px;background:#d4d4d4"></div><div class="t" style="left:302px;top:319px">卷尺(M)</div><div class="t" style="right:1464px;top:319px;text-align:right">T</div><div class="t" style="left:302px;top:341px">量角器(O)</div><div class="t" style="left:302px;top:363px">坐标轴(X)</div><div class="a" style="left:298px;top:384px;width:176px;height:1px;background:#d4d4d4"></div><div class="t" style="left:302px;top:392px">尺寸(D)</div><div class="t" style="left:302px;top:414px">文字标注(T)</div><div class="t" style="left:302px;top:436px">三维文字(3)</div><div class="a" style="left:298px;top:457px;width:176px;height:1px;background:#d4d4d4"></div><div class="t" style="left:302px;top:465px">剖切面(N)</div><div class="a" style="left:298px;top:486px;width:176px;height:1px;background:#d4d4d4"></div><div class="t" style="left:302px;top:494px">高级镜头工具</div><svg style="left:460px;top:496px" width="6" height="9" viewBox="0 0 6 9"><path d="M1 1 L4.5 4.5 L1 8" fill="none" stroke="#333" stroke-width="1.2"/></svg><div class="t" style="left:302px;top:516px">互动</div><div class="t" style="left:302px;top:538px">沙箱</div><svg style="left:460px;top:540px" width="6" height="9" viewBox="0 0 6 9"><path d="M1 1 L4.5 4.5 L1 8" fill="none" stroke="#333" stroke-width="1.2"/></svg>
</body></html>
